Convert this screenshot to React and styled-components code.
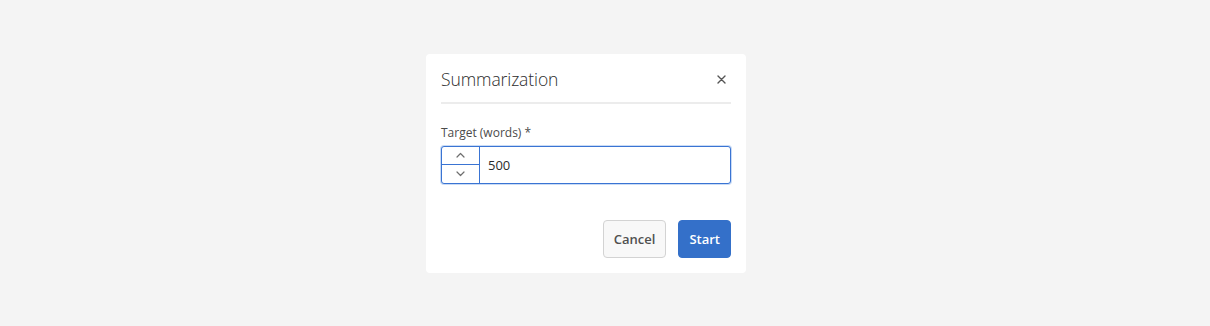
import { useState } from 'react';
import styled, { createGlobalStyle } from 'styled-components';

const GlobalStyle = createGlobalStyle`
  html, body {
    margin: 0;
    padding: 0;
    background: #f4f4f4;
    font-family: "Open Sans", "Noto Sans", sans-serif;
  }
`;

const Page = styled.div`
  height: 326px;
  display: flex;
  align-items: center;
  justify-content: center;
  padding-right: 38px;
  box-sizing: border-box;
`;

const Dialog = styled.div`
  width: 320px;
  box-sizing: border-box;
  background: #fff;
  border-radius: 4px;
  padding: 0 15px 15px;
  display: flex;
  flex-direction: column;
`;

const Header = styled.div`
  height: 50px;
  box-sizing: border-box;
  padding-top: 3px;
  display: flex;
  align-items: center;
  justify-content: space-between;
  border-bottom: 2px solid #ececec;
`;

const Title = styled.h2`
  margin: 0;
  font-size: 17.5px;
  font-weight: 300;
  color: #2c2c2c;
  letter-spacing: -0.1px;
`;

const CloseButton = styled.button`
  border: 0;
  background: none;
  padding: 0;
  margin-right: 4px;
  width: 12px;
  height: 12px;
  display: flex;
  align-items: center;
  justify-content: center;
  cursor: pointer;
`;

const Body = styled.div`
  padding-top: 21px;
  display: flex;
  flex-direction: column;
  gap: 5px;
`;

const Label = styled.label`
  font-size: 12px;
  line-height: 16px;
  color: #4b4b4b;
`;

const NumberField = styled.div`
  height: 38px;
  box-sizing: border-box;
  display: flex;
  border: 1px solid #3a74d3;
  border-radius: 3px;
  box-shadow: 0 0 0 1px #c9dbf5;
  background: #fff;
`;

const Stepper = styled.div`
  width: 37px;
  display: flex;
  flex-direction: column;
  border-right: 1px solid #3a74d3;
`;

const StepButton = styled.button`
  flex: 1;
  border: 0;
  background: none;
  padding: 0;
  display: flex;
  align-items: center;
  justify-content: center;
  cursor: pointer;
  border-bottom: ${(p) => (p.$top ? '1px solid #3a74d3' : '0')};
`;

const Input = styled.input`
  flex: 1;
  border: 0;
  outline: none;
  padding: 0 8px;
  font-family: inherit;
  font-size: 13px;
  color: #2c2c2c;
  caret-color: #2c2c2c;
  background: transparent;
`;

const Footer = styled.div`
  margin-top: 36px;
  display: flex;
  justify-content: flex-end;
  gap: 12px;
`;

const Button = styled.button`
  height: 38px;
  box-sizing: border-box;
  padding: 0 10px;
  border-radius: 4px;
  font-family: inherit;
  font-size: 13px;
  font-weight: 600;
  cursor: pointer;
  border: 1px solid ${(p) => (p.$primary ? '#3470c9' : '#d3d3d3')};
  background: ${(p) => (p.$primary ? '#3470c9' : '#f8f8f8')};
  color: ${(p) => (p.$primary ? '#fff' : '#505050')};
`;

const Chevron = ({ up }) => (
  <svg width="9" height="6" viewBox="0 0 9 6">
    <path
      d={up ? 'M1 5 L4.5 1.5 L8 5' : 'M1 1 L4.5 4.5 L8 1'}
      fill="none"
      stroke="#6e6e6e"
      strokeWidth="1.2"
      strokeLinecap="round"
      strokeLinejoin="round"
    />
  </svg>
);

const App = () => {
  const [target, setTarget] = useState(500);

  return (
    <>
      <GlobalStyle />
      <Page>
        <Dialog>
          <Header>
            <Title>Summarization</Title>
            <CloseButton aria-label="Close">
              <svg width="9" height="9" viewBox="0 0 9 9">
                <path d="M1 1 L8 8 M8 1 L1 8" stroke="#555" strokeWidth="1.4" strokeLinecap="round" />
              </svg>
            </CloseButton>
          </Header>
          <Body>
            <Label>Target (words) *</Label>
            <NumberField>
              <Stepper>
                <StepButton $top onClick={() => setTarget(target + 1)}>
                  <Chevron up />
                </StepButton>
                <StepButton onClick={() => setTarget(target - 1)}>
                  <Chevron />
                </StepButton>
              </Stepper>
              <Input
                autoFocus
                value={target}
                onChange={(e) => setTarget(e.target.value)}
              />
            </NumberField>
          </Body>
          <Footer>
            <Button>Cancel</Button>
            <Button $primary>Start</Button>
          </Footer>
        </Dialog>
      </Page>
    </>
  );
};

export default App;
